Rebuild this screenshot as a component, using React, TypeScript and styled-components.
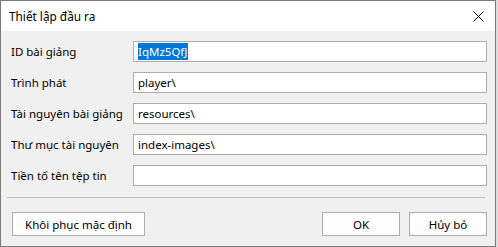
import React from 'react';
import styled, { createGlobalStyle } from 'styled-components';

const GlobalStyle = createGlobalStyle`
   html, body {
      margin: 0;
      padding: 0;
      background: #dcdcdc;
   }
   body {
      font-family: 'Noto Sans', 'Liberation Sans', sans-serif;
      font-size: 11.5px;
      color: #000;
   }
`;

const Window = styled.div`
   width: 494px;
   height: 245px;
   border: 1px solid #7a7a7a;
   background: #f0f0f0;
   display: flex;
   flex-direction: column;
`;

const TitleBar = styled.div`
   height: 30px;
   background: #fff;
   display: flex;
   align-items: center;
   padding-left: 8px;
   padding-right: 10px;
   font-size: 11.8px;
`;

const Title = styled.span`
   flex: 1;
`;

const CloseButton = styled.div`
   width: 12px;
   height: 12px;
   display: flex;
   align-items: center;
   justify-content: center;
   margin-right: 1px;
`;

const Body = styled.div`
   flex: 1;
   display: flex;
   flex-direction: column;
   padding: 10px 7px 0 10px;
`;

const Fields = styled.div`
   display: grid;
   grid-template-columns: 122px 354px;
   row-gap: 10px;
   align-items: center;
`;

const Label = styled.label`
   font-size: 11.5px;
   line-height: 21px;
`;

const Field = styled.div`
   box-sizing: border-box;
   height: 21px;
   border: 1px solid #adadad;
   background: #fff;
   display: flex;
   align-items: center;
   padding-left: 4px;
   font-size: 11.5px;
`;

const Selected = styled.span<{ $on?: boolean }>`
   background: ${({ $on }) => ($on ? '#0078d7' : 'transparent')};
   color: ${({ $on }) => ($on ? '#fff' : '#000')};
   line-height: 17px;
   padding-right: 1px;
`;

const Separator = styled.div`
   margin: 11px 3px 0 -4px;
   height: 1px;
   background: #c2c2c2;
`;

const Footer = styled.div`
   display: flex;
   align-items: center;
   margin-top: 14px;
   gap: 9px;
   padding-right: 1px;
`;

const Button = styled.button<{ $wide?: boolean }>`
   box-sizing: border-box;
   height: 24px;
   width: ${({ $wide }) => ($wide ? '133px' : '78px')};
   border: 1px solid #adadad;
   background: #fdfdfd;
   font-family: inherit;
   font-size: 11.5px;
   color: #000;
   padding: 0;
   &:first-child {
      margin-left: 1px;
      margin-right: auto;
   }
`;

const rows = [
   { label: 'ID bài giảng', value: 'IqMz5QfJ', selected: true },
   { label: 'Trình phát', value: 'player\\' },
   { label: 'Tài nguyên bài giảng', value: 'resources\\' },
   { label: 'Thư mục tài nguyên', value: 'index-images\\' },
   { label: 'Tiền tố tên tệp tin', value: '' },
];

export default function App() {
   return (
      <>
         <GlobalStyle />
         <Window>
            <TitleBar>
               <Title>Thiết lập đầu ra</Title>
               <CloseButton>
                  <svg width='11' height='11' viewBox='0 0 11 11'>
                     <path d='M0.5 0.5L10.5 10.5M10.5 0.5L0.5 10.5' stroke='#000' strokeWidth='1' />
                  </svg>
               </CloseButton>
            </TitleBar>
            <Body>
               <Fields>
                  {rows.map((r) => (
                     <React.Fragment key={r.label}>
                        <Label>{r.label}</Label>
                        <Field>
                           <Selected $on={r.selected}>{r.value}</Selected>
                        </Field>
                     </React.Fragment>
                  ))}
               </Fields>
               <Separator />
               <Footer>
                  <Button $wide>Khôi phục mặc định</Button>
                  <Button>OK</Button>
                  <Button>Hủy bỏ</Button>
               </Footer>
            </Body>
         </Window>
      </>
   );
}
